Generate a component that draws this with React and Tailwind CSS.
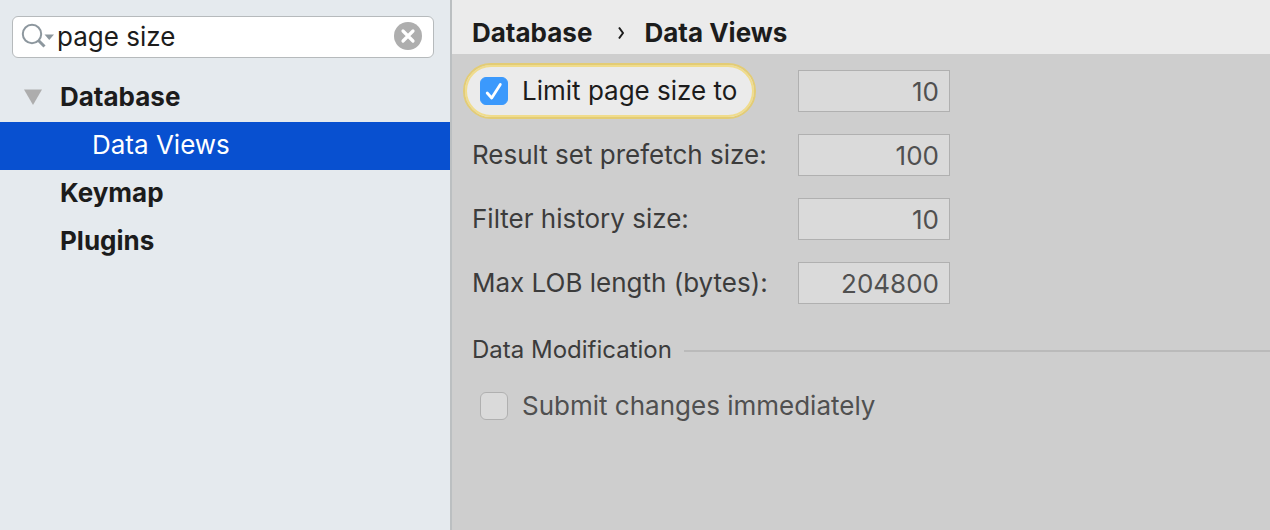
import React from 'react';

const treeItems = [
  { label: 'Database', expanded: true },
  { label: 'Data Views', child: true, selected: true },
  { label: 'Keymap' },
  { label: 'Plugins' },
];

function SearchBox() {
  return (
    <div className="mx-3 mr-4 flex h-[42px] items-center rounded-md border border-[#b6babc] bg-white pl-2 pr-[11px]">
      <svg className="h-8 w-9 shrink-0" viewBox="0 0 36 32" fill="none" aria-hidden="true">
        <circle cx="11" cy="13" r="9.2" stroke="#8d979e" strokeWidth="2" />
        <path d="M17.5 19.5 23.5 25.5" stroke="#8d979e" strokeWidth="3" />
        <path d="M23.5 13.5h9.5l-4.75 5.5z" fill="#8d979e" />
      </svg>
      <input
        type="text"
        aria-label="Search settings"
        defaultValue="page size"
        className="min-w-0 flex-1 bg-transparent leading-8 text-[#1c1c1c] outline-none"
      />
      <button type="button" aria-label="Clear search" className="-mt-0.5 h-7 w-7 shrink-0">
        <svg viewBox="0 0 28 28" className="h-7 w-7">
          <circle cx="14" cy="14" r="14" fill="#aeaeae" />
          <path d="M9 9l10 10M19 9L9 19" stroke="#fff" strokeWidth="3.2" strokeLinecap="round" />
        </svg>
      </button>
    </div>
  );
}

function Tree() {
  return (
    <ul className="mt-4">
      {treeItems.map((item) => (
        <li key={item.label}>
          <button
            type="button"
            className={
              item.selected
                ? 'flex h-12 w-full items-center bg-[#0850d0] pl-[92px] pb-0.5 text-left text-white'
                : 'flex h-12 w-full items-center pl-6 pb-0.5 text-left font-bold text-[#1c1c1c]'
            }
          >
            {!item.child && (
              <svg className="mr-[18px] h-4 w-[18px]" viewBox="0 0 18 16" aria-hidden="true">
                {item.expanded && <path d="M0 0.5h18L9 16z" fill="#adadad" />}
              </svg>
            )}
            {item.label}
          </button>
        </li>
      ))}
    </ul>
  );
}

function Check({ id, checked }) {
  return (
    <span className="grid h-7 w-7 shrink-0 place-items-center">
      <input
        id={id}
        type="checkbox"
        defaultChecked={checked}
        className="col-start-1 row-start-1 h-7 w-7 appearance-none rounded-md border border-[#b0b0b0] bg-[#dadada] checked:border-[#3b99fc] checked:bg-[#3b99fc]"
      />
      {checked && (
        <svg className="pointer-events-none col-start-1 row-start-1 h-7 w-7" viewBox="0 0 28 28" fill="none" aria-hidden="true">
          <path d="M7.2 16 11.7 21 20.3 7.5" stroke="#fff" strokeWidth="2.8" strokeLinecap="round" strokeLinejoin="round" />
        </svg>
      )}
    </span>
  );
}

function NumberField({ id, value, label }) {
  return (
    <input
      id={id}
      type="text"
      inputMode="numeric"
      aria-label={label}
      defaultValue={value}
      className="h-[42px] w-full min-w-0 border border-[#b0b0b0] bg-[#dadada] pr-2.5 text-right text-[#505050] outline-none"
    />
  );
}

const fields = [
  { id: 'prefetch', label: 'Result set prefetch size:', value: '100' },
  { id: 'history', label: 'Filter history size:', value: '10' },
  { id: 'lob', label: 'Max LOB length (bytes):', value: '204800' },
];

export default function App() {
  return (
    <div className="flex min-h-screen bg-[#cecece] font-['Inter','Liberation_Sans',sans-serif] text-[26px] leading-8">
      <aside className="w-[452px] shrink-0 border-r-2 border-[#bbbfc1] bg-[#e5eaee] pt-4">
        <SearchBox />
        <Tree />
      </aside>
      <main className="min-w-0 flex-1">
        <header className="flex h-[54px] items-center bg-[#ebebeb] pl-5 pt-3 font-bold text-[#1c1c1c]">
          <span>Database</span>
          <svg className="ml-6 mr-5 h-4 w-2" viewBox="0 0 8 16" fill="none" aria-hidden="true">
            <path d="M3 2.5 7 8 3 13.5" stroke="#1c1c1c" strokeWidth="2" />
          </svg>
          <span>Data Views</span>
        </header>
        <form className="pl-3 pt-4">
          <div className="grid grid-cols-[334px_152px] items-center gap-y-[22px]">
            <label
              htmlFor="limit"
              className="-my-2 -ml-px flex h-14 w-[293px] items-center gap-3.5 rounded-full border-2 border-[#e3cc75] bg-[#ebebeb] pl-[15px] text-[#1c1c1c] ring-2 ring-inset ring-[#f0dc8c]"
            >
              <Check id="limit" checked />
              <span>Limit page size to</span>
            </label>
            <NumberField id="limit-value" value="10" label="Page size limit" />
            {fields.map((f) => (
              <React.Fragment key={f.id}>
                <label htmlFor={f.id} className="pl-2 text-[#3c3c3c]">{f.label}</label>
                <NumberField id={f.id} value={f.value} />
              </React.Fragment>
            ))}
          </div>
          <div className="mt-[30px] flex items-center gap-3 pl-2">
            <h2 className="text-2xl text-[#3c3c3c]">Data Modification</h2>
            <div className="mt-0.5 h-0.5 flex-1 bg-[#bababa]" />
          </div>
          <label htmlFor="submit" className="mt-6 flex items-center gap-3.5 pl-4 text-[#505050]">
            <Check id="submit" />
            <span>Submit changes immediately</span>
          </label>
        </form>
      </main>
    </div>
  );
}
